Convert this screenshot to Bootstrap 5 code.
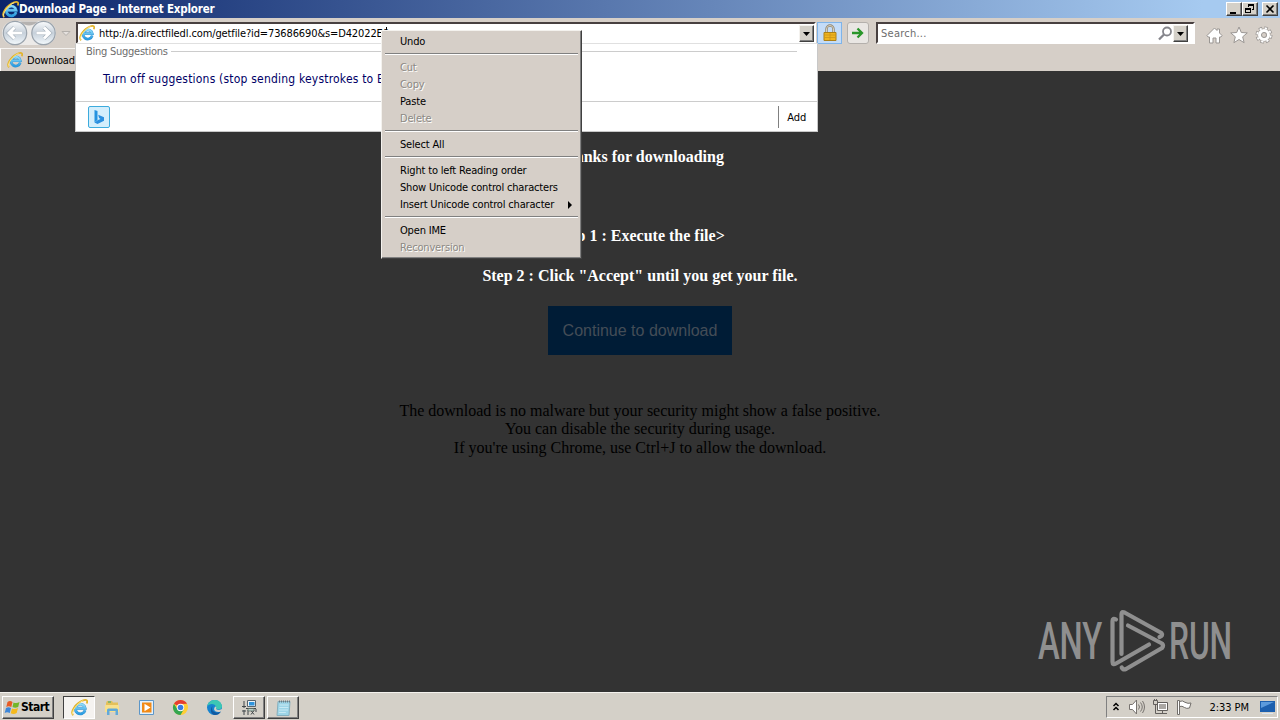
<!DOCTYPE html>
<html lang="en">
  <head>
    <meta charset="UTF-8" />
    <meta name="viewport" content="width=device-width, initial-scale=1.0" />
    <title>Download Page - Internet Explorer</title>
    <!-- Bootstrap CSS -->
    <link
      href="https://cdn.jsdelivr.net/npm/bootstrap@5.3.0/dist/css/bootstrap.min.css"
      rel="stylesheet"
    />
    <style>
      body {
        width: 1280px;
        height: 720px;
        font-family: "DejaVu Sans Condensed", "DejaVu Sans", sans-serif;
        font-size: 11px;
        line-height: 17px;
        letter-spacing: -0.17px;
        color: #000;
        background-color: #d4d0c8;
        white-space: nowrap;
      }
      svg {
        display: block;
        flex-shrink: 0;
      }

      /* Title bar */
      .title-bar {
        height: 18px;
        padding: 0 2px 0 2px;
        background: linear-gradient(90deg, #0a246a 0%, #a6caf0 94%);
        color: #fff;
        font-size: 11.5px;
        font-weight: 700;
        letter-spacing: -0.19px;
      }
      .win-btn {
        width: 16px;
        height: 14px;
        background-color: #d4d0c8;
        border: 1px solid;
        border-color: #fff #404040 #404040 #fff;
        box-shadow: inset -1px -1px 0 #808080;
      }

      /* Address row */
      .nav-row {
        height: 30px;
        padding-top: 4px;
        background-color: #d6cfc8;
      }
      .nav-arrows {
        width: 76px;
        margin-top: -2px;
      }
      .sunken {
        height: 22px;
        background-color: #fff;
        border: 2px solid;
        border-color: #484040 #fff #fff #484040;
      }
      .address-box {
        width: 740px;
        padding-left: 1px;
      }
      .address-text {
        margin-left: 4px;
        padding-top: 1px;
        letter-spacing: -0.12px;
      }
      .search-box {
        width: 319px;
        margin-left: 7px;
        padding: 0 5px 0 3px;
        color: #6d6d6d;
      }
      .search-hint {
        padding-top: 1px;
        letter-spacing: 0.25px;
      }
      .drop-btn {
        width: 15px;
        height: 17px;
        background-color: #d4d0c8;
        border: 1px solid;
        border-color: #f4f2ee #404040 #404040 #f4f2ee;
        box-shadow: inset -1px -1px 0 #808080;
      }
      .lock-btn {
        width: 25px;
        height: 22px;
        margin-left: 1px;
        background-color: #c4dcf8;
        border: 1px solid #7eb4ea;
      }
      .go-btn {
        width: 22px;
        height: 22px;
        margin-left: 5px;
        background-color: #e9e6e3;
        border: 1px solid #b4b0ac;
        border-radius: 3px;
      }
      .tool-icons {
        margin: 4px 0 0 11px;
        gap: 7px;
      }

      /* Tab row */
      .tab-row {
        height: 23px;
        background-color: #d6cfc8;
      }
      .page-tab {
        width: 75px;
        padding-left: 6px;
        border-top: 1px solid #f6f4f2;
        border-left: 1px solid #fff;
      }

      /* Web page */
      .web-page {
        height: 621px;
        background-color: #333;
        font-family: "Liberation Serif", serif;
        font-size: 16px;
        line-height: 18.4px;
        letter-spacing: 0;
      }
      .step-line {
        height: 19px;
        color: #fff;
        font-weight: 700;
      }
      .step-first {
        height: 156px;
        padding-top: 77px;
      }
      .step-last {
        margin: 21px 0 20px;
      }
      .continue-btn {
        width: 184px;
        height: 49px;
        padding-top: 1px;
        background-color: #001c36;
        color: #444d56;
        font-family: "Liberation Sans", sans-serif;
        font-size: 16px;
      }
      .page-note {
        margin-top: 47px;
      }
      .watermark {
        position: absolute;
        left: 1030px;
        top: 605px;
      }

      /* Suggestions list */
      .suggest-box {
        position: absolute;
        left: 75px;
        top: 43px;
        width: 743px;
        height: 89px;
        background-color: #fff;
        border: 1px solid #c8c8c8;
        border-top-color: #e0e0e0;
      }
      .suggest-head {
        height: 15px;
        padding: 0 20px 0 10px;
        color: #6d6d6d;
        letter-spacing: -0.25px;
      }
      .suggest-rule {
        height: 1px;
        margin-left: 3px;
        background-color: #ccc;
      }
      .suggest-item {
        height: 42px;
        padding: 10px 0 0 27px;
        color: #000066;
        font-size: 12px;
        line-height: 20px;
        letter-spacing: 0.2px;
      }
      .suggest-foot {
        height: 30px;
        padding: 0 11px 0 12px;
        border-top: 1px solid #ccc;
      }
      .add-cell {
        height: 22px;
        padding: 3px 0 0 8px;
        border-left: 1px solid #808080;
      }

      /* Context menu */
      .context-menu {
        position: absolute;
        left: 381px;
        top: 30px;
        width: 201px;
        height: 229px;
        padding: 2px;
        background-color: #d6cfc8;
        border: 1px solid;
        border-color: #f4f2ee #404040 #404040 #f4f2ee;
        box-shadow: inset -1px -1px 0 #808080;
      }
      .menu-line {
        height: 17px;
        padding: 0 7px 0 16px;
      }
      .menu-off {
        color: #8c8984;
        text-shadow: 1px 1px 0 #fff;
      }
      .menu-rule {
        height: 2px;
        margin: 3px 1px 4px 1px;
        border-top: 1px solid #808080;
        border-bottom: 1px solid #fff;
      }
      .text-caret {
        position: absolute;
        left: 386px;
        top: 27px;
        width: 1px;
        height: 4px;
        background-color: #000;
      }

      /* Taskbar */
      .task-bar {
        height: 28px;
        padding: 3px 2px 0 2px;
        border-top: 1px solid #f4f2ee;
      }
      .task-btn {
        width: 32px;
        height: 23px;
        background-color: #d4d0c8;
        border: 1px solid;
        border-color: #fff #404040 #404040 #fff;
        box-shadow: inset -1px -1px 0 #808080;
      }
      .task-active {
        margin-left: 9px;
        background-color: #f5f3f0;
        border-color: #404040 #fff #fff #404040;
        box-shadow: none;
      }
      .task-open {
        margin-left: 2px;
      }
      .start-btn {
        width: 52px;
        padding-left: 1px;
        font-size: 12px;
        font-weight: 700;
        letter-spacing: -0.5px;
      }
      .task-plain {
        width: 34px;
        height: 23px;
      }
      .tray-box {
        width: 172px;
        height: 22px;
        padding: 0 1px 0 5px;
        border: 1px solid;
        border-color: #808080 #fff #fff #808080;
      }
      .tray-icons {
        margin-left: 8px;
        gap: 6px;
      }
      .tray-clock {
        margin: 0 10px 0 auto;
        letter-spacing: -0.05px;
      }
    </style>
  </head>
  <body class="overflow-hidden">
    <!-- Shared icons -->
    <svg width="0" height="0" class="position-absolute">
      <defs>
        <linearGradient id="ieBlue" x1="0" y1="0" x2="0" y2="1">
          <stop offset="0" stop-color="#8fdcfa" />
          <stop offset="1" stop-color="#2b9be0" />
        </linearGradient>
        <linearGradient id="ball" x1="0" y1="0" x2="0" y2="1">
          <stop offset="0" stop-color="#fbfcfd" />
          <stop offset="0.5" stop-color="#c6d0da" />
          <stop offset="1" stop-color="#f4fafd" />
        </linearGradient>
        <symbol id="ie" viewBox="0 0 16 16">
          <path d="M13.2 10.6A4.6 4.6 0 1 1 13.3 8.7H5" fill="none" stroke="#3592cf" stroke-width="2.7" />
          <path d="M13.2 10.6A4.6 4.6 0 1 1 13.3 8.7H5" fill="none" stroke="url(#ieBlue)" stroke-width="2" />
          <path d="M2.2 15.2C-1.5 13 4.5 3.5 11.5 1.2c3.5-1 4.3.5 3.3 3" fill="none" stroke="#e2b32b" stroke-width="1.7" />
          <path d="M1.6 14.6C.2 12 5.5 4 11.5 1.5" fill="none" stroke="#fce98e" stroke-width=".9" />
        </symbol>
      </defs>
    </svg>

    <div class="title-bar d-flex align-items-center">
      <svg width="17" height="17"><use href="#ie" /></svg>
      <span>Download Page - Internet Explorer</span>
      <div class="d-flex ms-auto">
        <div class="win-btn"><svg width="14" height="12"><path d="M3 9h6v2H3z" /></svg></div>
        <div class="win-btn">
          <svg width="14" height="12" fill="none" stroke="#000" shape-rendering="crispEdges">
            <path d="M5.5 4V1.5h5v5H9M5 2.5h6M2.5 5.5h5v4h-5zM2 6.5h6" />
          </svg>
        </div>
        <div class="win-btn ms-1"><svg width="14" height="12"><path d="M3.5 2.5l7 7M10.5 2.5l-7 7" stroke="#000" stroke-width="1.6" /></svg></div>
      </div>
    </div>

    <div class="nav-row d-flex">
      <div class="nav-arrows">
        <svg width="76" height="26">
          <path d="M14 1h30a12 12 0 0 1 0 24H14A12 12 0 0 1 14 1z" fill="#eceae8" />
          <path d="M20 1.5h18q-9 8-18 0" fill="#b5b2b0" />
          <g fill="url(#ball)" stroke="#9aa3ac" stroke-width="1.2">
            <circle cx="15" cy="13" r="11.7" />
            <circle cx="43.5" cy="13" r="11.7" />
          </g>
          <g fill="none" stroke="#a3aeb9" stroke-width="4.2">
            <path d="M14.5 7.5L9 13l5.5 5.5M9.5 13h12.5" />
            <path d="M44 7.5l5.5 5.5-5.5 5.5M49 13H36.5" />
          </g>
          <g fill="none" stroke="#fff" stroke-width="3">
            <path d="M14.5 7.5L9 13l5.5 5.5M9.5 13h12.5" />
            <path d="M44 7.5l5.5 5.5-5.5 5.5M49 13H36.5" />
          </g>
          <path d="M62 11.5h8l-4 4z" fill="#e5e1de" stroke="#b3afab" />
        </svg>
      </div>
      <div class="sunken address-box d-flex align-items-center">
        <svg width="16" height="16"><use href="#ie" /></svg>
        <span class="address-text">http://a.directfiledl.com/getfile?id=73686690&amp;s=D42022E8</span>
        <div class="drop-btn ms-auto"><svg width="13" height="15"><path d="M3 6h7l-3.5 4z" /></svg></div>
      </div>
      <div class="lock-btn d-flex justify-content-center align-items-center">
        <svg width="16" height="18">
          <path d="M4.5 9V5a3.5 3.5 0 0 1 7 0v4" fill="none" stroke="#8d8471" stroke-width="2.4" />
          <path d="M4.5 9V5a3.5 3.5 0 0 1 7 0v4" fill="none" stroke="#d8d0bc" />
          <path d="M2 8.5h12v8H2z" fill="#efb41f" stroke="#ac8018" />
          <path d="M2.5 11h11M2.5 13.5h11M8 9v7" stroke="#cd9619" stroke-width=".8" />
        </svg>
      </div>
      <div class="go-btn d-flex justify-content-center align-items-center">
        <svg width="14" height="14"><path d="M1 7h10M6.5 2.5L11 7l-4.5 4.5" fill="none" stroke="#29962a" stroke-width="2.3" /></svg>
      </div>
      <div class="sunken search-box d-flex align-items-center">
        <span class="search-hint">Search...</span>
        <svg class="ms-auto" width="15" height="15">
          <circle cx="9" cy="5.5" r="4" fill="none" stroke="#85858b" stroke-width="1.8" />
          <path d="M6 8.5l-5 5" stroke="#85858b" stroke-width="2.3" />
        </svg>
        <div class="drop-btn"><svg width="13" height="15"><path d="M3 6h7l-3.5 4z" /></svg></div>
      </div>
      <div class="tool-icons d-flex">
        <svg width="17" height="18"><path d="M1 9.5L8.5 2l2.5 2.5V3h2.5v4L16 9.5l-1 1.5h-1.5v6H10v-5H7v5H3.5v-6H2z" fill="#fff" stroke="#9a9693" /></svg>
        <svg width="18" height="18"><path d="M9 1l2.3 5.5 6 .4-4.6 3.9 1.4 5.9L9 13.5l-5.1 3.2 1.4-5.9L.7 6.9l6-.4z" fill="#fff" stroke="#9a9693" /></svg>
        <svg width="18" height="18">
          <circle cx="9" cy="9" r="7" fill="none" stroke="#9a9693" stroke-width="3" stroke-dasharray="3.5 2" />
          <circle cx="9" cy="9" r="4.3" fill="none" stroke="#9a9693" stroke-width="4.5" />
          <circle cx="9" cy="9" r="6.8" fill="none" stroke="#fff" stroke-width="1.8" stroke-dasharray="2.3 3.04" stroke-dashoffset="-.5" />
          <circle cx="9" cy="9" r="4.5" fill="none" stroke="#fff" stroke-width="3" />
        </svg>
      </div>
    </div>

    <div class="tab-row">
      <div class="page-tab d-flex align-items-center h-100">
        <svg width="16" height="16"><use href="#ie" /></svg>
        <span class="ms-1">Download</span>
      </div>
    </div>

    <div class="web-page text-center">
      <div class="step-line step-first">Thanks for downloading</div>
      <div class="step-line">Step 1 : Execute the file&gt;</div>
      <div class="step-line step-last">Step 2 : Click "Accept" until you get your file.</div>
      <div class="continue-btn d-flex justify-content-center align-items-center mx-auto">
        Continue to download
      </div>
      <div class="page-note">
        The download is no malware but your security might show a false positive.<br />
        You can disable the security during usage.<br />
        If you're using Chrome, use Ctrl+J to allow the download.
      </div>
    </div>

    <svg class="watermark" width="240" height="80">
      <g fill="#8f8f8f" font-family="Roboto, sans-serif" font-size="51" font-weight="500">
        <text x="8" y="54" textLength="64" lengthAdjust="spacingAndGlyphs">ANY</text>
        <text x="139" y="54" textLength="63" lengthAdjust="spacingAndGlyphs">RUN</text>
      </g>
      <g fill="none" stroke="#8f8f8f" stroke-width="4.2" stroke-linejoin="round" stroke-linecap="round">
        <path d="M91.5 49V9q0-3 3-1.5l37 20.5q2 2.5-2 4" />
        <path d="M98 20.5l34 18q2 2.2 0 4.5L96 64q-3 1.2-4.3-1.5" />
        <path d="M86 14.5q-3.5-2-3.5 1.5v41q0 3.5 3.5 1.5l33-19" />
      </g>
    </svg>

    <div class="task-bar d-flex">
      <div class="task-btn start-btn d-flex align-items-center">
        <svg width="17" height="17">
          <path d="M3.5 3q2.5-2 5 0L7.3 8q-2.8-1.7-5 0z" fill="#e85b25" />
          <path d="M9.5 3.5q3 1.3 6-.5l-1.3 5q-3 1.5-5.7 0z" fill="#74b62a" />
          <path d="M2 9q2.5-1.7 5 0l-1.2 5Q3 12.5.7 14z" fill="#3d86d9" />
          <path d="M8 9.5q3 1.3 6-.5l-1.3 5q-3 1.7-6 .3z" fill="#f5b91d" />
        </svg>
        <span>Start</span>
      </div>
      <div class="task-btn task-active d-flex justify-content-center align-items-center">
        <svg width="17" height="17"><use href="#ie" /></svg>
      </div>
      <div class="task-plain d-flex justify-content-center align-items-center">
        <svg width="17" height="17">
          <path d="M2 4l1-2h5l1 1.5h5V13H2z" fill="#e4c05a" />
          <path d="M4 3h3" stroke="#6db06e" stroke-width="1.5" />
          <path d="M1 6h14v7H1z" fill="#f8e08c" />
          <path d="M3 16v-5q0-1.5 1.5-1.5h8q1.5 0 1.5 1.5v5h-2.5v-4h-6v4z" fill="#62a9d8" />
        </svg>
      </div>
      <div class="task-plain d-flex justify-content-center align-items-center">
        <svg width="17" height="17">
          <path d="M1.5 1.5h14v14h-14z" fill="#e4f1fc" stroke="#5c96c8" />
          <path d="M4 3.5h9.5v10H4z" fill="#f28a16" />
          <path d="M6.5 4.8l6 3.7-6 3.7z" fill="#fff" />
        </svg>
      </div>
      <div class="task-plain d-flex justify-content-center align-items-center">
        <svg width="17" height="17">
          <circle cx="8.5" cy="8.5" r="7.5" fill="#ffce35" />
          <path d="M8.5 8.5L2 4.7A7.5 7.5 0 0 1 15 4.7L8.5 5z" fill="#e53d30" />
          <path d="M2 4.7A7.5 7.5 0 0 0 8.5 16l3.2-5.5-6.3-.2z" fill="#34a650" />
          <circle cx="8.5" cy="8.5" r="3.7" fill="#fff" />
          <circle cx="8.5" cy="8.5" r="2.8" fill="#3a7ce0" />
        </svg>
      </div>
      <div class="task-plain d-flex justify-content-center align-items-center">
        <svg width="17" height="17">
          <circle cx="8.5" cy="8.5" r="7.5" fill="#1683cf" />
          <path d="M1.2 7.5C2 2.5 6 1 9 1c4.5 0 7 3.5 7 6.5 0 3-4.5 4-6 2C11 8 9 5 6 5c-2 0-4 1-4.8 2.5z" fill="#3cc7b4" />
          <path d="M6.5 7q-2 5 3.5 6.5 3 .5 5-1-2 3.5-6 3.5C5 16 3.5 10 6.5 7z" fill="#125aa0" />
          <path d="M9 7.5q2 0 1 2.5 2.5 2 5.5 0l1 1.5-3 1.5q-5 .5-5.5-3z" fill="#d4d0c8" />
        </svg>
      </div>
      <div class="task-btn task-open d-flex justify-content-center align-items-center">
        <svg width="17" height="18">
          <path d="M6.5 1.5h8v6h-8z" fill="#eef4f8" stroke="#59656e" />
          <path d="M8 3h5.5v3.500H8z" fill="#2f95de" />
          <path d="M2 3h2M3 4v5M1 7.5h4M5 9.5h10M3 11v5M1 12h4M7 11v5M10 11.5l3 4M13 11.5l-3 4M15 10v3" fill="none" stroke="#40464a" />
          <path d="M7 9.5h6v2.5H7z" fill="#b8d0c8" stroke="#536058" stroke-width=".7" />
        </svg>
      </div>
      <div class="task-btn task-open d-flex justify-content-center align-items-center">
        <svg width="17" height="18">
          <path d="M3 2.5h12l-1 14H2z" fill="#9dd5e7" stroke="#86afbd" />
          <path d="M4.5 6h9M4.3 8.5h9M4 11h9M3.8 13.5h7" stroke="#c8e9f3" />
          <path d="M4 2.5h11" stroke="#6a7b82" stroke-width="2" stroke-dasharray="1 1" />
        </svg>
      </div>
      <div class="tray-box d-flex align-items-center ms-auto">
        <svg width="8" height="12" fill="none" stroke="#000" stroke-width="1.5"><path d="M1.5 5L4 2.5 6.5 5M1.5 9L4 6.5 6.5 9" /></svg>
        <div class="tray-icons d-flex">
          <svg width="18" height="18" fill="none" stroke="#77736f">
            <path d="M1.5 6.5h3L8.500 2v14l-4-4.5h-3z" fill="#fff" />
            <path d="M10.5 6.5q2 2.5 0 5M12.5 4.5q3.5 4.5 0 9M14.5 3q4 6 0 12" />
          </svg>
          <svg width="18" height="18" fill="none" stroke="#625f5c">
            <path d="M5.5 4.5h10v8h-10zM7 15.5h8M10.5 12.5v3" fill="#fff" />
            <path d="M7 6h7v5H7z" fill="#aaa7a3" stroke="none" />
            <path d="M1.5 2.5h4v4h-4zM2.5 1v2M4.5 1v2M3.5 6.5v9h4" />
          </svg>
          <svg width="18" height="18" fill="#fff" stroke="#716e6a"><path d="M1.5 2.5h2v14h-2zM3.5 3.5q3-1.5 5.5.8 3 1.7 6 .7l-1.5 5q-3 1-5-.5-2.5-2-5-1z" /></svg>
        </div>
        <span class="tray-clock">2:33 PM</span>
        <svg width="17" height="16">
          <path d="M1 2h15v11H1z" fill="#1c5fae" />
          <path d="M2 3h13L2 9z" fill="#5b9adc" />
          <path d="M3 14.5h11" stroke="#dce7f1" />
        </svg>
      </div>
    </div>

    <div class="suggest-box">
      <div class="suggest-head d-flex align-items-center">
        Bing Suggestions
        <div class="suggest-rule flex-grow-1"></div>
      </div>
      <div class="suggest-item">Turn off suggestions (stop sending keystrokes to B</div>
      <div class="suggest-foot d-flex justify-content-between align-items-center">
        <svg width="22" height="22">
          <rect x=".5" y=".5" width="21" height="21" rx="1.5" fill="#d3eefc" stroke="#3cabdd" />
          <path d="M6.5 4l3 1v9l-3 2.5z" fill="#2493e0" />
          <path d="M6.5 16.5l3.5-2.5 2.5-1-1.5-1-.8-3.3 5.8 2.5v3.5L9.5 18z" fill="#2a8fe0" />
        </svg>
        <div class="add-cell">Add</div>
      </div>
    </div>

    <div class="text-caret"></div>
    <div class="context-menu">
      <div class="menu-line">Undo</div>
      <div class="menu-rule"></div>
      <div class="menu-line menu-off">Cut</div>
      <div class="menu-line menu-off">Copy</div>
      <div class="menu-line">Paste</div>
      <div class="menu-line menu-off">Delete</div>
      <div class="menu-rule"></div>
      <div class="menu-line">Select All</div>
      <div class="menu-rule"></div>
      <div class="menu-line">Right to left Reading order</div>
      <div class="menu-line">Show Unicode control characters</div>
      <div class="menu-line d-flex justify-content-between align-items-center">
        Insert Unicode control character
        <svg width="5" height="8"><path d="M1 0l4 4-4 4z" /></svg>
      </div>
      <div class="menu-rule"></div>
      <div class="menu-line">Open IME</div>
      <div class="menu-line menu-off">Reconversion</div>
    </div>

    <!-- Bootstrap JS Bundle with Popper -->
    <script src="https://cdn.jsdelivr.net/npm/bootstrap@5.3.0/dist/js/bootstrap.bundle.min.js"></script>
  </body>
</html>
